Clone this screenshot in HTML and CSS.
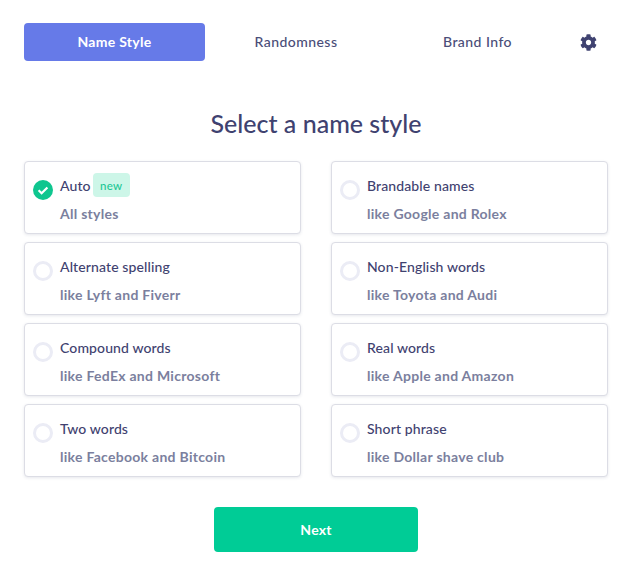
FILE: index.html
```html
<!DOCTYPE html>
<html lang="en">
<head>
<meta charset="utf-8">
<title>Select a name style</title>
<link rel="stylesheet" href="styles.css">
</head>
<body>
<main class="page">
  <nav class="tabs">
    <a class="tab tab-active">Name Style</a>
    <a class="tab">Randomness</a>
    <a class="tab">Brand Info</a>
    <span class="gear">
      <svg viewBox="0 0 512 512" width="17" height="17"><path fill="#3f4270" d="M487.4 315.7l-42.6-24.6c4.3-23.2 4.3-47 0-70.2l42.6-24.6c4.9-2.8 7.1-8.6 5.5-14-11.100-35.600-30-67.800-54.700-94.600-3.800-4.100-10-5.100-14.800-2.300L380.800 110c-17.900-15.400-38.500-27.300-60.800-35.100V25.800c0-5.600-3.900-10.500-9.400-11.700-36.700-8.200-74.300-7.800-109.200 0-5.500 1.200-9.400 6.100-9.400 11.700V75c-22.200 7.900-42.800 19.800-60.800 35.100L88.700 85.500c-4.900-2.800-11-1.900-14.800 2.300-24.700 26.700-43.600 58.900-54.700 94.600-1.700 5.400.6 11.200 5.500 14L67.300 221c-4.300 23.200-4.300 47 0 70.200l-42.600 24.600c-4.900 2.800-7.100 8.600-5.500 14 11.100 35.600 30 67.800 54.700 94.600 3.800 4.100 10 5.100 14.800 2.300l42.600-24.600c17.900 15.400 38.500 27.300 60.800 35.100v49.200c0 5.600 3.900 10.500 9.400 11.700 36.700 8.200 74.300 7.800 109.200 0 5.500-1.200 9.400-6.100 9.400-11.700v-49.200c22.200-7.900 42.800-19.800 60.800-35.100l42.600 24.600c4.900 2.800 11 1.900 14.800-2.300 24.700-26.700 43.600-58.900 54.700-94.600 1.500-5.500-.7-11.300-5.600-14.100zM256 336c-44.100 0-80-35.900-80-80s35.900-80 80-80 80 35.900 80 80-35.900 80-80 80z"/></svg>
    </span>
  </nav>

  <h1 class="title">Select a name style</h1>

  <section class="grid">
    <div class="card">
      <span class="check">
        <svg viewBox="0 0 20 20" width="20" height="20"><circle cx="10" cy="10" r="10" fill="#0fc68f"/><path d="M5.600 10.300l3 3 5.800-5.800" fill="none" stroke="#fff" stroke-width="2.200"/></svg>
      </span>
      <div class="text">
        <div class="name">Auto <span class="badge">new</span></div>
        <div class="desc">All styles</div>
      </div>
    </div>
    <div class="card">
      <span class="radio"></span>
      <div class="text"><div class="name">Brandable names</div><div class="desc">like Google and Rolex</div></div>
    </div>
    <div class="card">
      <span class="radio"></span>
      <div class="text"><div class="name">Alternate spelling</div><div class="desc">like Lyft and Fiverr</div></div>
    </div>
    <div class="card">
      <span class="radio"></span>
      <div class="text"><div class="name">Non-English words</div><div class="desc">like Toyota and Audi</div></div>
    </div>
    <div class="card">
      <span class="radio"></span>
      <div class="text"><div class="name">Compound words</div><div class="desc">like FedEx and Microsoft</div></div>
    </div>
    <div class="card">
      <span class="radio"></span>
      <div class="text"><div class="name">Real words</div><div class="desc">like Apple and Amazon</div></div>
    </div>
    <div class="card">
      <span class="radio"></span>
      <div class="text"><div class="name">Two words</div><div class="desc">like Facebook and Bitcoin</div></div>
    </div>
    <div class="card">
      <span class="radio"></span>
      <div class="text"><div class="name">Short phrase</div><div class="desc">like Dollar shave club</div></div>
    </div>
  </section>

  <div class="actions"><button class="next">Next</button></div>
</main>
</body>
</html>
```
FILE: styles.css
```css
* { box-sizing: border-box; }
html, body { margin: 0; background: #fff; }
body { font-family: "Lato", "Open Sans", sans-serif; color: #3f4270; }
.page { width: 630px; height: 574px; padding: 23px 22px 0 24px; overflow: hidden; }
.tabs { display: flex; height: 38px; align-items: center; }
.tab { width: 181px; height: 38px; display: flex; align-items: center; justify-content: center; padding-bottom: 1px; font-size: 14px; font-weight: 500; color: #4a4d78; border-radius: 4px; letter-spacing: 0.45px; }
.tab + .tab { width: 182px; }
.tab:last-of-type { width: 181px; }
.tab-active { background: #667ae8; color: #fff; font-weight: 700; letter-spacing: 0.3px; }
.gear { width: 40px; display: flex; justify-content: center; padding-left: 1px; }
.gear svg { display: block; }
.title { margin: 46px 0 0; height: 33px; line-height: 33px; text-align: center; font-size: 25px; font-weight: 500; color: #3f4270; letter-spacing: 0; }
.grid { margin-top: 21px; display: grid; grid-template-columns: 277px 277px; column-gap: 30px; row-gap: 8px; }
.card { height: 73px; background: #fff; border: 1px solid #dcdde5; border-radius: 4px; box-shadow: 0 1px 3px rgba(60, 66, 110, 0.12); display: flex; padding: 18px 0 0 8px; }
.check, .radio { width: 20px; height: 20px; flex: none; }
.check svg { display: block; }
.radio { border: 3px solid #ebecf5; border-radius: 50%; }
.text { margin-left: 7px; margin-top: -10px; }
.name { height: 30px; display: flex; align-items: center; gap: 2px; font-size: 14px; font-weight: 500; color: #3f4270; letter-spacing: 0.12px; }
.badge { width: 37px; height: 24px; background: #cdf6e8; color: #22c794; border-radius: 4px; font-size: 11.500px; letter-spacing: 0.2px; display: flex; align-items: center; justify-content: center; }
.desc { margin-top: 3px; font-size: 14px; line-height: 22px; font-weight: 700; color: #7b7f9e; letter-spacing: 0.28px; }
.actions { margin-top: 30px; display: flex; justify-content: center; }
.next { width: 204px; height: 45px; border: 0; border-radius: 4px; background: #00cc96; color: #fff; font: 700 14px "Lato", sans-serif; letter-spacing: 0.2px; }
```
